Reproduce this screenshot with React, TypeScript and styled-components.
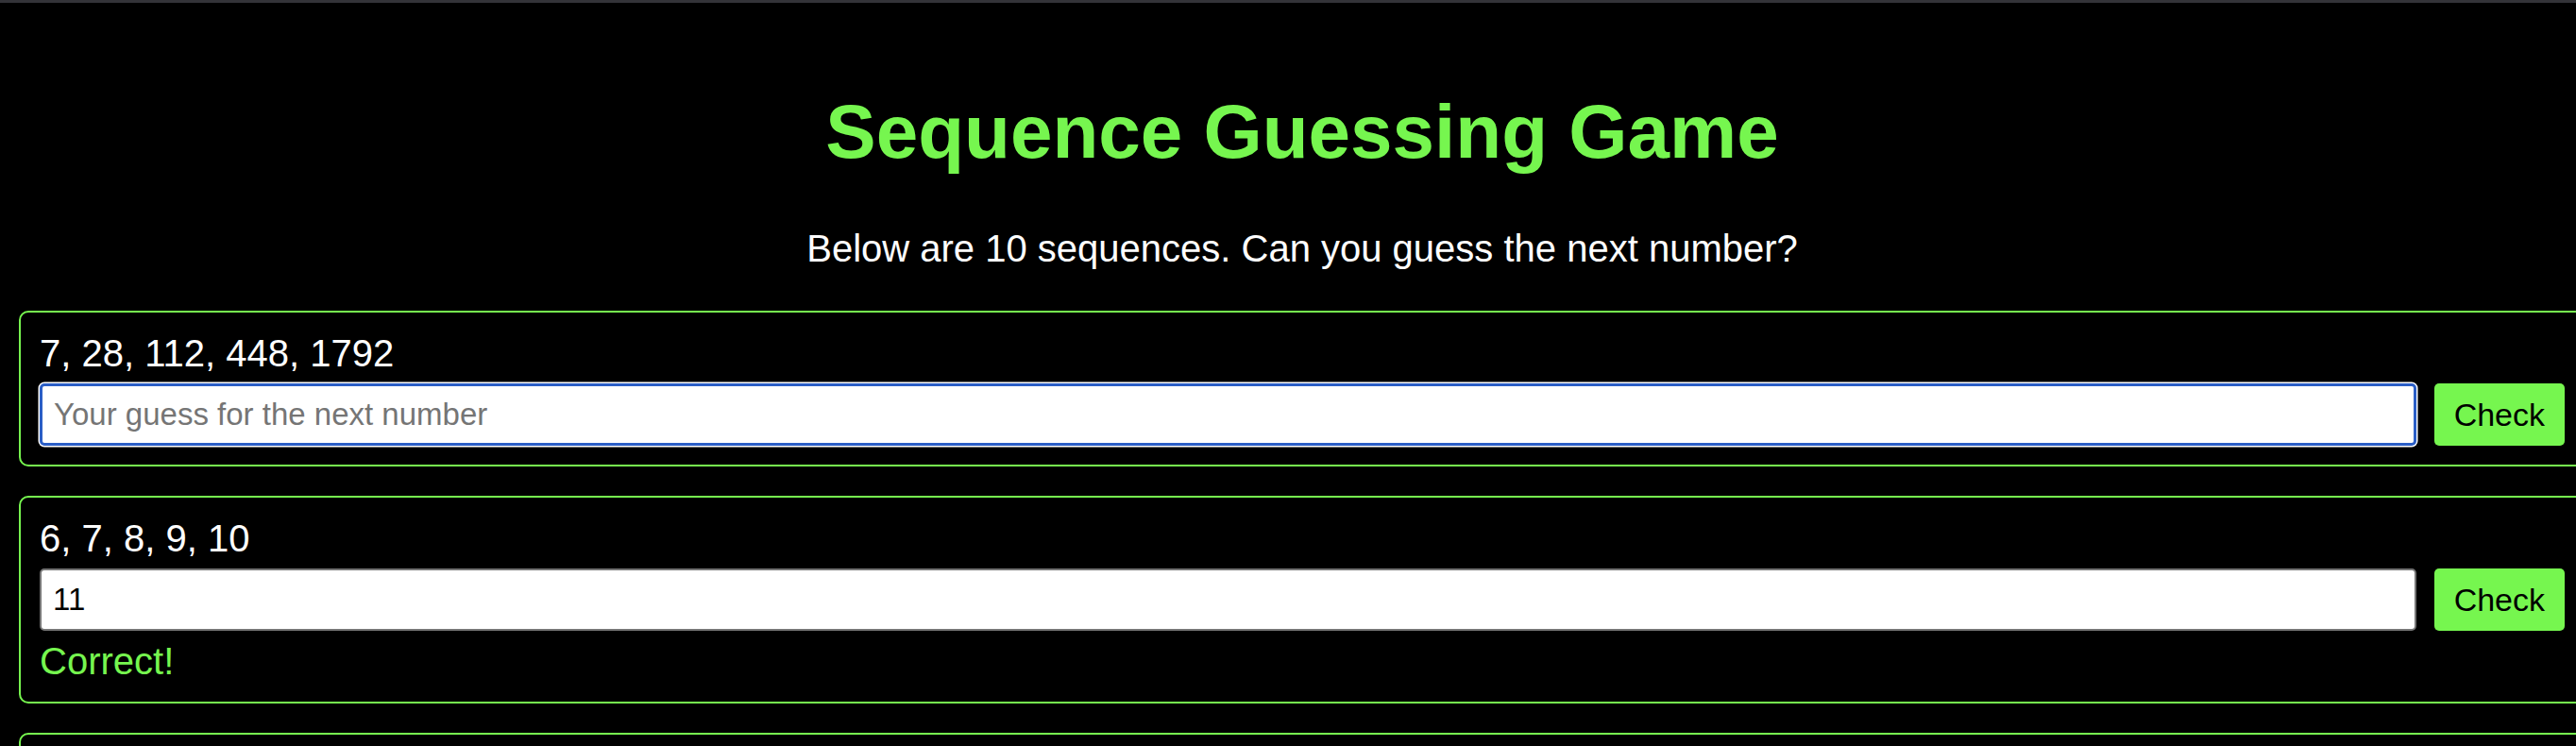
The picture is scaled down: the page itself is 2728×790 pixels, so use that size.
import { useState } from "react";
import styled, { createGlobalStyle } from "styled-components";

const GREEN = "#76f64f";

const GlobalStyle = createGlobalStyle`
    html, body {
        margin: 0;
        padding: 0;
        background: #000;
        overflow: hidden;
    }
    body {
        font-family: "Liberation Sans", Arial, Helvetica, sans-serif;
        color: #fff;
    }
`;

const TopBar = styled.div`
    height: 3px;
    background: #333338;
`;

const Main = styled.main`
    padding-left: 20px;
`;

const Column = styled.div`
    width: calc(100% + 10px);
`;

const Title = styled.h1`
    margin: 91px 0 0;
    font-size: 80px;
    line-height: 92px;
    font-weight: 700;
    color: ${GREEN};
    text-align: center;
`;

const Intro = styled.p`
    margin: 54px 0 43px;
    font-size: 40px;
    line-height: 46px;
    text-align: center;
`;

const Card = styled.section`
    box-sizing: border-box;
    display: flex;
    flex-direction: column;
    gap: 9px;
    padding: 20px;
    margin-bottom: 31px;
    border: 2px solid ${GREEN};
    border-radius: 10px;
`;

const Numbers = styled.div`
    font-size: 40px;
    line-height: 46px;
`;

const Row = styled.div`
    display: flex;
    align-items: stretch;
    height: 66px;
`;

const GuessInput = styled.input<{ $focused?: boolean }>`
    flex: 1;
    min-width: 0;
    box-sizing: border-box;
    padding: 0 12px;
    font-family: inherit;
    font-size: 33px;
    color: #000;
    background: #fff;
    border: ${(p) => (p.$focused ? "3.5px solid #2b5ec6" : "2px solid #767676")};
    border-radius: 5px;
    box-shadow: ${(p) => (p.$focused ? "0 0 0 1.5px #fff" : "none")};
    outline: none;

    &::placeholder {
        color: #757575;
    }
`;

const CheckButton = styled.button`
    margin-left: 19px;
    padding: 0 21px;
    font-family: inherit;
    font-size: 34px;
    color: #000;
    background: ${GREEN};
    border: none;
    border-radius: 5px;
    cursor: pointer;
`;

const Result = styled.div<{ $ok: boolean }>`
    font-size: 40px;
    line-height: 46px;
    color: ${(p) => (p.$ok ? GREEN : "#ff5555")};
`;

const SEQUENCES: { terms: number[]; next: number }[] = [
    { terms: [7, 28, 112, 448, 1792], next: 7168 },
    { terms: [6, 7, 8, 9, 10], next: 11 },
    { terms: [2, 4, 8, 16, 32], next: 64 },
    { terms: [1, 1, 2, 3, 5], next: 8 },
    { terms: [3, 6, 9, 12, 15], next: 18 },
    { terms: [1, 4, 9, 16, 25], next: 36 },
    { terms: [100, 90, 80, 70, 60], next: 50 },
    { terms: [2, 3, 5, 7, 11], next: 13 },
    { terms: [1, 8, 27, 64, 125], next: 216 },
    { terms: [5, 10, 20, 40, 80], next: 160 },
];

export default function App() {
    const [guesses, setGuesses] = useState<string[]>(() =>
        SEQUENCES.map((_, i) => (i === 1 ? "11" : ""))
    );
    const [results, setResults] = useState<(boolean | null)[]>(() =>
        SEQUENCES.map((_, i) => (i === 1 ? true : null))
    );

    const updateGuess = (index: number, value: string) => {
        setGuesses((prev) => prev.map((g, i) => (i === index ? value : g)));
    };

    const check = (index: number) => {
        const ok = Number(guesses[index]) === SEQUENCES[index].next;
        setResults((prev) => prev.map((r, i) => (i === index ? ok : r)));
    };

    return (
        <>
            <GlobalStyle />
            <TopBar />
            <Main>
                <Column>
                    <Title>Sequence Guessing Game</Title>
                    <Intro>Below are 10 sequences. Can you guess the next number?</Intro>
                    {SEQUENCES.map((seq, i) => (
                        <Card key={i}>
                            <Numbers>{seq.terms.join(", ")}</Numbers>
                            <Row>
                                <GuessInput
                                    $focused={i === 0}
                                    placeholder="Your guess for the next number"
                                    value={guesses[i]}
                                    onChange={(e) => updateGuess(i, e.target.value)}
                                />
                                <CheckButton onClick={() => check(i)}>Check</CheckButton>
                            </Row>
                            {results[i] !== null && (
                                <Result $ok={!!results[i]}>
                                    {results[i] ? "Correct!" : "Wrong, try again!"}
                                </Result>
                            )}
                        </Card>
                    ))}
                </Column>
            </Main>
        </>
    );
}
